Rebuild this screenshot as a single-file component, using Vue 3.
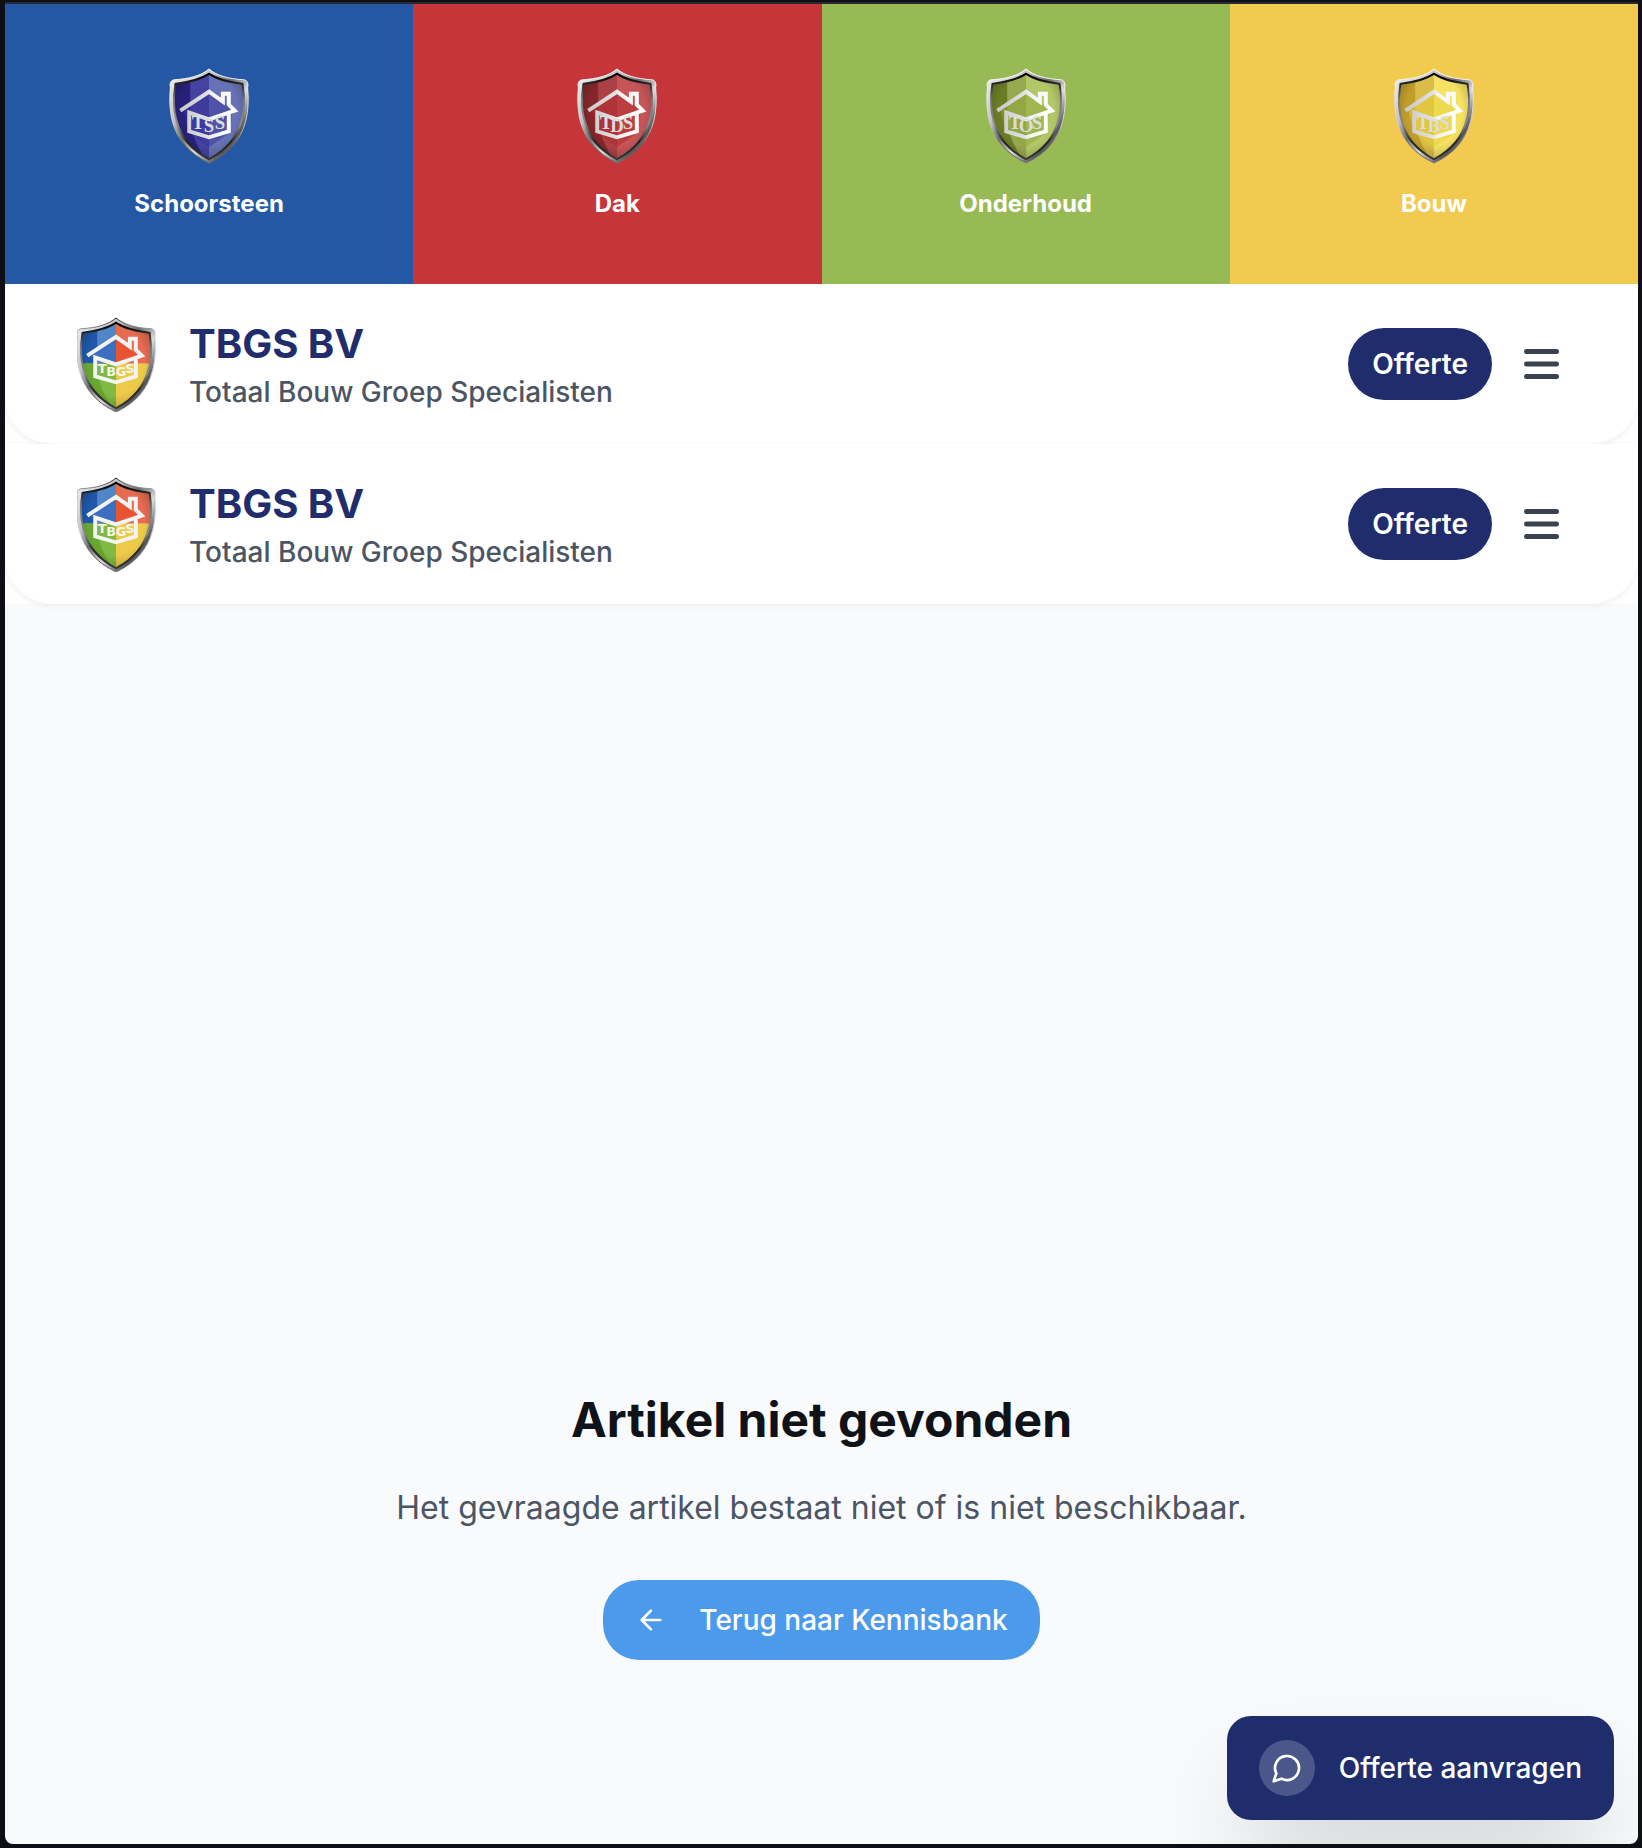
<script setup>
const divisions = [
  { name: 'Schoorsteen', tone: 'blue', dark: '#27217a', mid: '#4543a0', light: '#6672b5', deep: '#35339a', letters: ['T', 'S', 'S'] },
  { name: 'Dak', tone: 'red', dark: '#84262b', mid: '#ac4145', light: '#c55557', deep: '#b3262a', letters: ['T', 'D', 'S'] },
  { name: 'Onderhoud', tone: 'green', dark: '#6c7c24', mid: '#98a84e', light: '#b2c768', deep: '#8fa53a', letters: ['T', 'O', 'S'] },
  { name: 'Bouw', tone: 'yellow', dark: '#c19d2a', mid: '#d9bd48', light: '#f5e262', deep: '#e9cf3c', letters: ['T', 'B', 'S'] },
]

const letterSpots = [
  { x: 29, y: 62 },
  { x: 40, y: 65 },
  { x: 51, y: 62 },
]

const groupLetters = [
  { char: 'T', x: 26, y: 57 },
  { char: 'B', x: 35, y: 60 },
  { char: 'G', x: 45, y: 60 },
  { char: 'S', x: 54, y: 57 },
]

const bars = ['main', 'sticky']
</script>

<template>
  <div class="window">
    <svg class="defs" width="0" height="0" aria-hidden="true">
      <defs>
        <linearGradient id="steel" x1="0" y1="0" x2="1" y2="1">
          <stop offset="0" stop-color="#f4f4f4" />
          <stop offset="0.3" stop-color="#c4c4c4" />
          <stop offset="0.45" stop-color="#6b6b6b" />
          <stop offset="0.6" stop-color="#dcdcdc" />
          <stop offset="0.78" stop-color="#555" />
          <stop offset="1" stop-color="#e2e2e2" />
        </linearGradient>
        <linearGradient id="rim" x1="0" y1="0" x2="0" y2="1">
          <stop offset="0" stop-color="#000" />
          <stop offset="0.14" stop-color="#333" />
          <stop offset="0.3" stop-color="#777" />
          <stop offset="0.6" stop-color="#888" />
          <stop offset="0.8" stop-color="#222" />
          <stop offset="1" stop-color="#333" />
        </linearGradient>
        <linearGradient id="outline" x1="0" y1="0" x2="0" y2="1">
          <stop offset="0" stop-color="#fff" />
          <stop offset="0.6" stop-color="#ccc" />
          <stop offset="0.85" stop-color="#555" />
          <stop offset="1" stop-color="#777" />
        </linearGradient>
        <linearGradient id="groupOutline" x1="0" y1="0" x2="0" y2="1">
          <stop offset="0" stop-color="#111" />
          <stop offset="0.16" stop-color="#bbb" />
          <stop offset="0.6" stop-color="#ccc" />
          <stop offset="0.85" stop-color="#555" />
          <stop offset="1" stop-color="#777" />
        </linearGradient>
        <radialGradient id="shade" cx="0.5" cy="0.45" r="0.6">
          <stop offset="0.6" stop-color="#000" stop-opacity="0" />
          <stop offset="1" stop-color="#000" stop-opacity="0.3" />
        </radialGradient>
        <linearGradient id="paint" gradientUnits="userSpaceOnUse" x1="11" y1="0" x2="66" y2="0">
          <stop offset="0" stop-color="#c8c8c8" />
          <stop offset="0.5" stop-color="#e2e2e2" />
          <stop offset="0.6" stop-color="#f4f4f4" />
          <stop offset="1" stop-color="#fff" />
        </linearGradient>
        <path id="outer" d="M40 1C48 8 60 11 76 12C79 13 80 16 79 20C80 30 80 42 77 54C72 73 59 87 40 96C21 87 8 73 3 54C0 42 0 30 1 20C0 16 1 13 4 12C20 11 32 8 40 1Z" />
        <path id="inner" d="M40 7C49 13 60 15 73 17C75 30 75 42 72 52C68 69 57 82 40 91C23 82 12 69 8 52C5 42 5 30 7 17C20 15 31 13 40 7Z" />
        <clipPath id="field"><use href="#inner" /></clipPath>
        <g id="house" fill="none">
          <path d="M11 43L40 24L54 34V26H60V37L66 43L40 52L20 45V64L40 70L60 64V45" stroke-width="4" />
        </g>
      </defs>
    </svg>

    <nav class="divisions" aria-label="Specialisten">
      <a v-for="d in divisions" :key="d.name" href="#" class="division" :class="d.tone">
        <svg class="shield" viewBox="0 0 80 97" aria-hidden="true">
          <use href="#outer" fill="url(#steel)" stroke="url(#outline)" stroke-width="1" />
          <use href="#inner" fill="none" stroke="url(#rim)" stroke-width="4" />
          <g clip-path="url(#field)">
            <rect width="40" height="97" :fill="d.dark" />
            <path d="M21 0H40V97C26 78 21 64 21 45Z" :fill="d.mid" />
            <rect x="40" width="40" height="97" :fill="d.light" />
            <path d="M14 43L40 25L64 42L60 66L40 80L20 66Z" :fill="d.deep" opacity="0.5" />
            <rect width="80" height="97" fill="url(#shade)" />
          </g>
          <use href="#house" stroke="url(#paint)" />
          <text v-for="(l, i) in d.letters" :key="i" class="initial" :x="letterSpots[i].x" :y="letterSpots[i].y">{{ l }}</text>
        </svg>
        <span class="division-name">{{ d.name }}</span>
      </a>
    </nav>

    <div v-for="bar in bars" :key="bar" class="bar-wrap">
      <header class="bar">
        <a href="#" class="brand">
          <svg class="shield" viewBox="1 -1 80 97" aria-hidden="true">
            <use href="#outer" fill="url(#steel)" stroke="url(#groupOutline)" stroke-width="1" />
            <use href="#inner" fill="none" stroke="url(#rim)" stroke-width="4" />
            <g clip-path="url(#field)">
              <rect width="40" height="47" fill="#1f57aa" />
              <path d="M21 0H40V47H21Z" fill="#5186c9" />
              <rect x="40" width="40" height="47" fill="#e66b50" />
              <rect y="47" width="40" height="50" fill="#67a82f" />
              <path d="M21 47H40V97C26 78 21 64 21 47Z" fill="#80b944" />
              <rect x="40" y="47" width="40" height="50" fill="#edcb48" />
              <path d="M14 40L40 22V48L20 42Z" fill="#3a6fc2" />
              <path d="M40 22L64 40L40 48Z" fill="#e85432" />
              <rect width="80" height="97" fill="url(#shade)" />
            </g>
            <path d="M11 39L40 20L54 30V22H60V33L66 39L40 48L19 41V60L40 66L60 60V41" fill="none" stroke="#f4f4f4" stroke-width="4" />
            <text v-for="l in groupLetters" :key="l.char" class="initial group" :x="l.x" :y="l.y">{{ l.char }}</text>
          </svg>
          <span class="brand-text">
            <span class="brand-name">TBGS BV</span>
            <span class="brand-line">Totaal Bouw Groep Specialisten</span>
          </span>
        </a>
        <div class="actions">
          <button type="button" class="quote">Offerte</button>
          <button type="button" class="menu" aria-label="Menu">
            <svg width="36" height="30" viewBox="0 0 36 30" fill="none" stroke="#3a4250" stroke-width="5" stroke-linecap="round" aria-hidden="true">
              <path d="M2.5 2.5H32.500M2.5 15H32.500M2.5 27.500H32.500" />
            </svg>
          </button>
        </div>
      </header>
    </div>

    <main class="content">
      <h1>Artikel niet gevonden</h1>
      <p>Het gevraagde artikel bestaat niet of is niet beschikbaar.</p>
      <a href="#" class="back">
        <svg width="32" height="32" viewBox="0 0 24 24" fill="none" stroke="currentColor" stroke-width="2" stroke-linecap="round" stroke-linejoin="round" aria-hidden="true">
          <path d="M12 19l-7-7 7-7M19 12H5" />
        </svg>
        Terug naar Kennisbank
      </a>
    </main>

    <button type="button" class="request">
      <span class="bubble">
        <svg width="32" height="32" viewBox="0 0 24 24" fill="none" stroke="currentColor" stroke-width="2" stroke-linecap="round" stroke-linejoin="round" aria-hidden="true">
          <path d="M7.9 20A9 9 0 1 0 4 16.1L2 22Z" />
        </svg>
      </span>
      Offerte aanvragen
    </button>
  </div>
</template>

<style>
body {
  margin: 0;
  background: #0e0f14;
}
</style>

<style scoped>
.window {
  position: relative;
  display: flex;
  flex-direction: column;
  box-sizing: border-box;
  min-height: calc(100vh - 8px);
  margin: 4px 4px 4px 5px;
  background: #f9fafc;
  border-radius: 0 0 8px 8px;
  overflow: hidden;
  font-family: Inter, "Liberation Sans", sans-serif;
  box-shadow: 0 -2px 0 #272a33;
}

.defs {
  position: absolute;
}

a {
  color: inherit;
  text-decoration: none;
}

button {
  border: 0;
  font-family: inherit;
  cursor: pointer;
}

.shield {
  display: block;
  flex: none;
  width: 80px;
  height: 96px;
}

.divisions {
  display: grid;
  grid-template-columns: repeat(4, 1fr);
}

.division {
  display: flex;
  flex-direction: column;
  align-items: center;
  gap: 24px;
  padding: 64px 16px;
  color: #fff;
}

.blue { background: #2458a5; }
.red { background: #c6353a; }
.green { background: #97ba55; }
.yellow { background: #f2ca50; }

.division-name {
  font-size: 24px;
  line-height: 32px;
  font-weight: 700;
}

.initial {
  font-family: "Liberation Serif", serif;
  font-size: 19px;
  font-weight: 700;
  text-anchor: middle;
  fill: #dcdcdc;
}

.initial.group {
  font-family: "DejaVu Sans", sans-serif;
  font-size: 13px;
  fill: #f7f7e8;
}

.bar-wrap {
  background: #fefefe;
  overflow: hidden;
}

.bar-wrap:last-of-type {
  overflow: visible;
}

.bar {
  display: flex;
  align-items: center;
  justify-content: space-between;
  padding: 32px 72px;
  background: #fff;
  border-radius: 0 0 48px 48px;
  box-shadow: 0 2px 6px rgba(0, 0, 0, 0.06);
}

.brand {
  display: flex;
  align-items: center;
  gap: 32px;
}

.brand-text {
  display: flex;
  flex-direction: column;
}

.brand-name {
  font-size: 40px;
  line-height: 56px;
  font-weight: 700;
  color: #1f2d6d;
}

.brand-line {
  font-size: 28px;
  line-height: 40px;
  font-weight: 500;
  color: #4b5563;
}

.actions {
  display: flex;
  align-items: center;
  gap: 26px;
}

.quote {
  padding: 16px 24px;
  border-radius: 36px;
  background: #1f2d6d;
  color: #fff;
  font-size: 28px;
  line-height: 40px;
  font-weight: 600;
}

.menu {
  display: flex;
  padding: 6px;
  background: transparent;
}

.content {
  flex: 1;
  display: flex;
  flex-direction: column;
  align-items: center;
  justify-content: flex-end;
  padding: 64px 32px 184px;
  text-align: center;
}

h1 {
  margin: 0 0 32px;
  font-size: 48px;
  line-height: 64px;
  font-weight: 700;
  color: #0f1217;
}

p {
  margin: 0 0 48px;
  font-size: 32px;
  line-height: 48px;
  color: #4b5563;
}

.back {
  display: flex;
  align-items: center;
  gap: 32px;
  padding: 20px 32px;
  border-radius: 36px;
  background: #4c9aea;
  color: #fff;
  font-size: 28px;
  line-height: 40px;
  font-weight: 500;
}

.request {
  position: absolute;
  right: 24px;
  bottom: 24px;
  display: flex;
  align-items: center;
  gap: 24px;
  padding: 24px 32px;
  border-radius: 24px;
  background: #1f2d6d;
  color: #fff;
  font-size: 28px;
  line-height: 40px;
  font-weight: 500;
  box-shadow: 0 50px 100px -24px rgba(0, 0, 0, 0.25);
}

.bubble {
  display: flex;
  align-items: center;
  justify-content: center;
  width: 56px;
  height: 56px;
  border-radius: 50%;
  background: rgba(255, 255, 255, 0.2);
}
</style>
